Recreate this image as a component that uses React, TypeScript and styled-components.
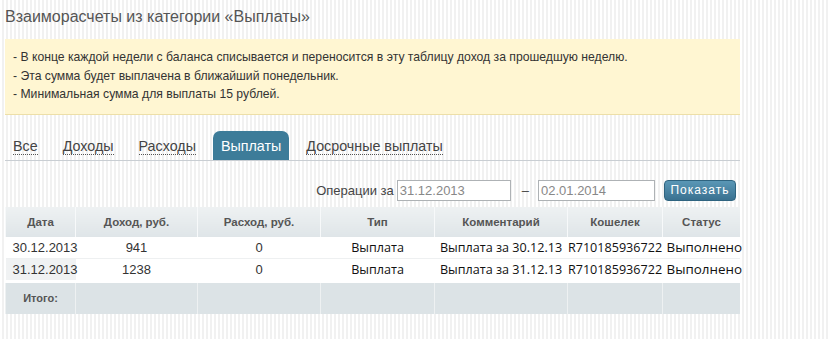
import React from "react";
import styled, { createGlobalStyle } from "styled-components";

const GlobalStyle = createGlobalStyle`
  html, body {
    margin: 0;
    padding: 0;
  }
  body {
    font-family: "Liberation Sans", Arial, sans-serif;
    background: repeating-linear-gradient(90deg, #ffffff 0 2px, #f1f1f1 2px 4px);
    min-height: 339px;
  }
`;

const Page = styled.div`
  width: 735px;
  padding: 0 0 0 5px;
`;

const Title = styled.h1`
  margin: 0 0 11px;
  padding-top: 5px;
  font-size: 16px;
  line-height: 23px;
  font-weight: normal;
  color: #555;
`;

const Notice = styled.div`
  background: #fff6d2;
  border-bottom: 1px solid #eddfa8;
  padding: 9px 8px 10px;
  font-size: 12.2px;
  line-height: 18.5px;
  color: #333;
`;

const Tabs = styled.ul`
  list-style: none;
  margin: 16px 0 0;
  padding: 0;
  display: flex;
  gap: 9px;
  height: 29px;
  border-bottom: 1px solid #c9ced3;
`;

const Tab = styled.li<{ $active?: boolean }>`
  padding: 0 8px;
  display: flex;
  align-items: center;
  font-size: 14.3px;
  color: ${(p) => (p.$active ? "#fff" : "#444")};
  background: ${(p) => (p.$active ? "#3d7c99" : "transparent")};
  border-radius: 7px 7px 0 0;
  span {
    padding-top: 3px;
    border-bottom: ${(p) => (p.$active ? "none" : "1px dotted #555")};
    line-height: 15px;
  }
`;

const Filter = styled.div`
  display: flex;
  justify-content: flex-end;
  align-items: center;
  margin: 19px 4px 6px 0;
  font-size: 13px;
  color: #444;
`;

const DateInput = styled.div<{ $w: number }>`
  width: ${(p) => p.$w}px;
  height: 19px;
  box-sizing: content-box;
  margin-left: 3px;
  padding: 0 2px;
  border: 1px solid #aeb2b5;
  background: #fff;
  color: #888;
  font-size: 13px;
  line-height: 19px;
`;

const Dash = styled.span`
  margin: 0 6px 0 11px;
`;

const ShowButton = styled.button`
  margin-left: 9px;
  height: 21px;
  width: 72px;
  border: 1px solid #2f6480;
  border-radius: 4px;
  background: linear-gradient(#5a97b6, #3a7190);
  color: #fff;
  font-family: "Liberation Sans", Arial, sans-serif;
  font-size: 12px;
  letter-spacing: 1px;
  padding: 0;
`;

const Table = styled.table`
  width: 735px;
  table-layout: fixed;
  border-collapse: collapse;
  font-size: 12px;
`;

const HeadCell = styled.th<{ $w: number }>`
  width: ${(p) => p.$w}px;
  height: 30px;
  padding: 0;
  background: linear-gradient(#eef1f2, #dfe5e8);
  border-left: 1px solid #f7f9fa;
  color: #555;
  font-weight: bold;
  font-size: 11.5px;
  text-align: center;
`;

const Row = styled.tr`
  background: #fff;
  border-bottom: 1px solid #eef0f1;
`;

const Cell = styled.td<{ $wide?: boolean; $shade?: boolean; $align?: string }>`
  height: 21px;
  padding: 0;
  text-align: ${(p) => p.$align || "center"};
  font-family: ${(p) => (p.$wide ? '"Open Sans", "Noto Sans", sans-serif' : '"Liberation Sans", Arial, sans-serif')};
  font-size: ${(p) => (p.$wide ? "12.6px" : "13px")};
  color: ${(p) => (p.$wide ? "#111" : "#333")};
  white-space: nowrap;
  background: ${(p) => (p.$shade ? "#f0f2f3" : "transparent")};
  overflow: visible;
`;

const DateText = styled.span`
  padding-left: 7px;
`;

const StatusText = styled.span`
  padding-left: 4px;
  font-size: 13.4px;
`;

const TotalCell = styled.td`
  height: 31px;
  padding: 0;
  background: #dce3e6;
  border-left: 1px solid #eef1f2;
  border-top: 3px solid #fff;
  font-size: 11px;
  font-weight: bold;
  color: #555;
  text-align: center;
`;

const columns = [
  { title: "Дата", w: 69 },
  { title: "Доход, руб.", w: 121 },
  { title: "Расход, руб.", w: 122 },
  { title: "Тип", w: 113 },
  { title: "Комментарий", w: 132 },
  { title: "Кошелек", w: 94 },
  { title: "Статус", w: 77 },
];

const rows = [
  { date: "30.12.2013", income: "941", outcome: "0", comment: "Выплата за 30.12.13" },
  { date: "31.12.2013", income: "1238", outcome: "0", comment: "Выплата за 31.12.13" },
];

export default function App() {
  return (
    <Page>
      <GlobalStyle />
      <Title>Взаиморасчеты из категории «Выплаты»</Title>
      <Notice>
        - В конце каждой недели с баланса списывается и переносится в эту таблицу доход за прошедшую неделю.
        <br />- Эта сумма будет выплачена в ближайший понедельник.
        <br />- Минимальная сумма для выплаты 15 рублей.
      </Notice>
      <Tabs>
        <Tab><span>Все</span></Tab>
        <Tab><span>Доходы</span></Tab>
        <Tab><span>Расходы</span></Tab>
        <Tab $active><span>Выплаты</span></Tab>
        <Tab><span>Досрочные выплаты</span></Tab>
      </Tabs>
      <Filter>
        Операции за
        <DateInput $w={108}>31.12.2013</DateInput>
        <Dash>–</Dash>
        <DateInput $w={111}>02.01.2014</DateInput>
        <ShowButton>Показать</ShowButton>
      </Filter>
      <Table>
        <thead>
          <tr>
            {columns.map((c) => (
              <HeadCell key={c.title} $w={c.w}>{c.title}</HeadCell>
            ))}
          </tr>
        </thead>
        <tbody>
          {rows.map((r, i) => (
            <Row key={r.date}>
              <Cell $align="left" $shade={i === 1}><DateText>{r.date}</DateText></Cell>
              <Cell>{r.income}</Cell>
              <Cell>{r.outcome}</Cell>
              <Cell $wide>Выплата</Cell>
              <Cell $wide>{r.comment}</Cell>
              <Cell $wide>R710185936722</Cell>
              <Cell $wide $align="left"><StatusText>Выполнено</StatusText></Cell>
            </Row>
          ))}
          <tr>
            <TotalCell>Итого:</TotalCell>
            {columns.slice(1).map((c) => (
              <TotalCell key={c.title} />
            ))}
          </tr>
        </tbody>
      </Table>
    </Page>
  );
}
